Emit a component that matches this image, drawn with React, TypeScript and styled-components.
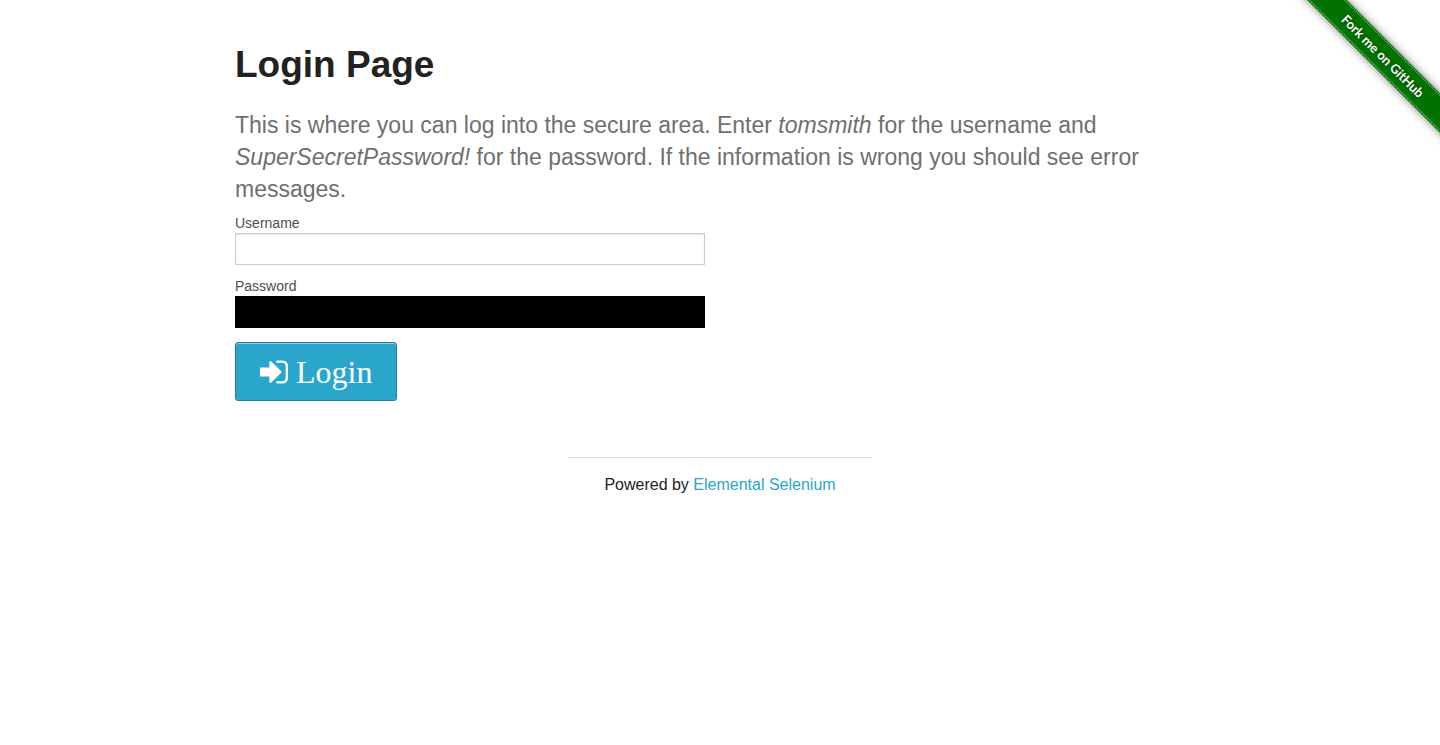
import React from "react";
import styled, { createGlobalStyle } from "styled-components";

const GlobalStyle = createGlobalStyle`
  *, *::before, *::after { box-sizing: border-box; }
  body {
    margin: 0;
    background: #fff;
    color: #222;
    font-family: "Liberation Sans", Arial, Helvetica, sans-serif;
    font-size: 16px;
    line-height: 24px;
  }
`;

const Page = styled.div`
  position: relative;
  overflow-x: hidden;
`;

const RibbonCorner = styled.div`
  position: absolute;
  top: 0;
  right: 0;
  width: 149px;
  height: 149px;
  overflow: hidden;
`;

const Ribbon = styled.a`
  position: absolute;
  top: 42px;
  left: -18px;
  width: 220px;
  height: 28px;
  padding: 1px 0;
  transform: rotate(45deg);
  background: #007200;
  box-shadow: 0 0 8px rgba(0, 0, 0, 0.5);
  color: #fff;
  font-family: Lato, sans-serif;
  font-size: 13px;
  font-weight: 700;
  line-height: 24px;
  text-align: center;
  text-decoration: none;
  text-shadow: 0 0 3px rgba(0, 0, 0, 0.5);
`;

const Stitching = styled.span`
  display: block;
  border-top: 1px dotted #a5d0a5;
  border-bottom: 1px dotted #a5d0a5;
`;

const Content = styled.main`
  max-width: 1000px;
  margin: 0 auto;
  padding: 39px 15px 0;
`;

const Title = styled.h2`
  margin: 0 0 18px;
  font-size: 37px;
  line-height: 52px;
  font-weight: 700;
`;

const Intro = styled.h4`
  margin: 0 0 8px;
  color: #6f6f6f;
  font-size: 23px;
  line-height: 32px;
  font-weight: 400;
`;

const Form = styled.form`
  display: flex;
  flex-direction: column;
  align-items: flex-start;
  gap: 14px;
`;

const Fields = styled.div`
  display: grid;
  gap: 11px;
  width: 50%;
  min-width: 240px;
  max-width: 470px;
`;

const Field = styled.div`
  display: flex;
  flex-direction: column;
`;

const Label = styled.label`
  color: #4d4d4d;
  font-size: 14px;
  line-height: 20px;
`;

const Input = styled.input<{ $masked?: boolean }>`
  width: 100%;
  height: 32px;
  padding: 7px;
  border: 1px solid ${(p) => (p.$masked ? "#000" : "#ccc")};
  border-radius: 0;
  background: ${(p) => (p.$masked ? "#000" : "#fff")};
  box-shadow: ${(p) => (p.$masked ? "none" : "inset 0 1px 2px rgba(0, 0, 0, 0.1)")};
  color: ${(p) => (p.$masked ? "#000" : "#404040")};
  font-family: inherit;
  font-size: 14px;
`;

const LoginButton = styled.button`
  display: flex;
  align-items: center;
  gap: 8px;
  height: 59px;
  padding: 0 24px;
  border: 1px solid #1e7e9d;
  border-radius: 3px;
  background: #2ba6cb;
  box-shadow: inset 0 1px 0 rgba(255, 255, 255, 0.5);
  color: #fff;
  font-family: "Liberation Serif", "Times New Roman", serif;
  font-size: 32px;
  line-height: 32px;
  cursor: pointer;
`;

const SignInIcon = styled.svg`
  width: 28px;
  height: 32px;
  fill: currentColor;
`;

const Footer = styled.footer`
  max-width: 304px;
  margin: 56px auto 0;
  padding-top: 15px;
  border-top: 1px solid #ddd;
  text-align: center;
`;

const FooterLink = styled.a`
  color: #2ba6cb;
  text-decoration: none;
`;

export default function App() {
  return (
    <Page>
      <GlobalStyle />
      <RibbonCorner>
        <Ribbon href="#github">
          <Stitching>Fork me on GitHub</Stitching>
        </Ribbon>
      </RibbonCorner>
      <Content>
        <Title>Login Page</Title>
        <Intro>
          This is where you can log into the secure area. Enter <em>tomsmith</em> for the
          username and <em>SuperSecretPassword!</em> for the password. If the information is
          wrong you should see error messages.
        </Intro>
        <Form onSubmit={(e) => e.preventDefault()}>
          <Fields>
            <Field>
              <Label htmlFor="username">Username</Label>
              <Input id="username" name="username" type="text" />
            </Field>
            <Field>
              <Label htmlFor="password">Password</Label>
              <Input id="password" name="password" type="password" $masked />
            </Field>
          </Fields>
          <LoginButton type="submit">
            <SignInIcon viewBox="0 0 1536 1792" preserveAspectRatio="none" aria-hidden="true">
              <path d="M1184 896q0 26-19 45l-544 544q-19 19-45 19t-45-19-19-45v-288h-448q-26 0-45-19t-19-45v-384q0-26 19-45t45-19h448v-288q0-26 19-45t45-19 45 19l544 544q19 19 19 45zm352-352v704q0 119-84.500 203.500t-203.500 84.500h-320q-13 0-22.500-9.500t-9.500-22.500q0-4-1-20t-.5-26.500 3-23.500 10-19.500 20.500-6.500h320q66 0 113-47t47-113v-704q0-66-47-113t-113-47h-312l-11.500-1-11.500-3-8-5.500-7-9-2-13.500q0-4-1-20t-.5-26.500 3-23.500 10-19.500 20.500-6.500h320q119 0 203.500 84.500t84.500 203.500z" />
            </SignInIcon>
            Login
          </LoginButton>
        </Form>
        <Footer>
          Powered by <FooterLink href="#elemental-selenium">Elemental Selenium</FooterLink>
        </Footer>
      </Content>
    </Page>
  );
}
